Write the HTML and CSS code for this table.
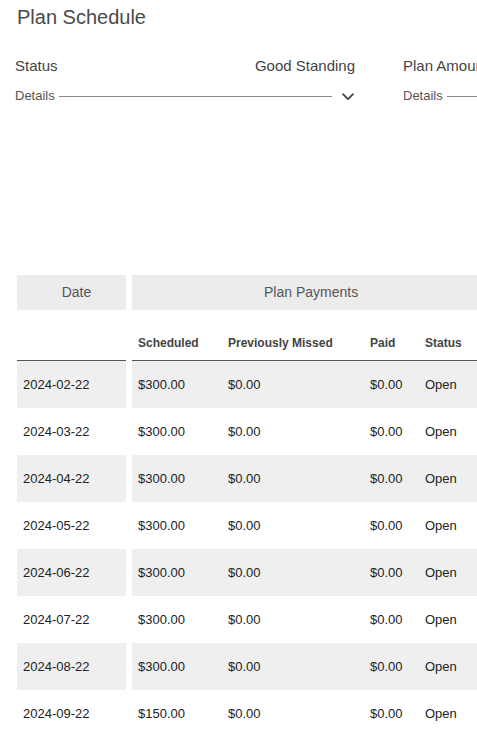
FILE: index.html
```html
<!DOCTYPE html>
<html lang="en">
<head>
<meta charset="utf-8">
<title>Plan Schedule</title>
<link rel="stylesheet" href="styles.css">
</head>
<body>
<div class="page">
  <h1 class="title">Plan Schedule</h1>

  <div class="cards">
    <div class="card">
      <div class="card-top">
        <span class="card-label">Status</span>
        <span class="card-value">Good Standing</span>
      </div>
      <div class="card-details">
        <span class="details-label">Details</span>
        <span class="details-line"></span>
        <svg class="chev" width="12" height="8" viewBox="0 0 12 8"><polyline points="1,1.2 6,6.2 11,1.2" fill="none" stroke="#444" stroke-width="1.8" stroke-linecap="round" stroke-linejoin="round"/></svg>
      </div>
    </div>
    <div class="card">
      <div class="card-top">
        <span class="card-label">Plan Amount</span>
        <span class="card-value">$2,250.00</span>
      </div>
      <div class="card-details">
        <span class="details-label">Details</span>
        <span class="details-line"></span>
        <svg class="chev" width="12" height="8" viewBox="0 0 12 8"><polyline points="1,1.2 6,6.2 11,1.2" fill="none" stroke="#444" stroke-width="1.8" stroke-linecap="round" stroke-linejoin="round"/></svg>
      </div>
    </div>
  </div>

  <div class="sched">
    <div class="row head">
      <div class="c-date">Date</div>
      <div class="c-pay">Plan Payments</div>
    </div>
    <div class="row sub">
      <div class="c-date"></div>
      <div class="c-pay cols">
        <span>Scheduled</span><span>Previously Missed</span><span>Paid</span><span>Status</span>
      </div>
    </div>
    <div class="row data alt">
      <div class="c-date">2024-02-22</div>
      <div class="c-pay cols"><span>$300.00</span><span>$0.00</span><span>$0.00</span><span>Open</span></div>
    </div>
    <div class="row data">
      <div class="c-date">2024-03-22</div>
      <div class="c-pay cols"><span>$300.00</span><span>$0.00</span><span>$0.00</span><span>Open</span></div>
    </div>
    <div class="row data alt">
      <div class="c-date">2024-04-22</div>
      <div class="c-pay cols"><span>$300.00</span><span>$0.00</span><span>$0.00</span><span>Open</span></div>
    </div>
    <div class="row data">
      <div class="c-date">2024-05-22</div>
      <div class="c-pay cols"><span>$300.00</span><span>$0.00</span><span>$0.00</span><span>Open</span></div>
    </div>
    <div class="row data alt">
      <div class="c-date">2024-06-22</div>
      <div class="c-pay cols"><span>$300.00</span><span>$0.00</span><span>$0.00</span><span>Open</span></div>
    </div>
    <div class="row data">
      <div class="c-date">2024-07-22</div>
      <div class="c-pay cols"><span>$300.00</span><span>$0.00</span><span>$0.00</span><span>Open</span></div>
    </div>
    <div class="row data alt">
      <div class="c-date">2024-08-22</div>
      <div class="c-pay cols"><span>$300.00</span><span>$0.00</span><span>$0.00</span><span>Open</span></div>
    </div>
    <div class="row data">
      <div class="c-date">2024-09-22</div>
      <div class="c-pay cols"><span>$150.00</span><span>$0.00</span><span>$0.00</span><span>Open</span></div>
    </div>
  </div>
</div>
</body>
</html>
```

FILE: styles.css
```css
html, body {
  margin: 0;
  padding: 0;
  background: #fff;
}
body {
  font-family: "Liberation Sans", Arial, Helvetica, sans-serif;
  color: #222;
  overflow: hidden;
}
.page {
  width: 477px;
  overflow: hidden;
}
.title {
  margin: 0;
  padding: 5px 0 0 17px;
  font-size: 20px;
  line-height: 24px;
  font-weight: 400;
  color: #4a4a4a;
}
.cards {
  display: flex;
  gap: 48px;
  margin-top: 28px;
  padding-left: 15px;
}
.card {
  flex: 0 0 340px;
}
.card-top {
  display: flex;
  justify-content: space-between;
  font-size: 15px;
  line-height: 18px;
  color: #444;
}
.card-details {
  display: flex;
  align-items: center;
  margin-top: 13px;
  height: 16px;
}
.details-label {
  font-size: 13px;
  line-height: 16px;
  color: #555;
}
.details-line {
  flex: 1;
  height: 1px;
  background: #888;
  margin: 0 10px 0 4px;
}
.chev {
  display: block;
  margin-top: 2px;
  margin-right: 1px;
}
.sched {
  margin-top: 171px;
  margin-left: 17px;
}
.row {
  display: flex;
  gap: 6px;
}
.c-date {
  flex: 0 0 109px;
  box-sizing: border-box;
}
.c-pay {
  flex: 0 0 377px;
  box-sizing: border-box;
}
.cols {
  display: grid;
  grid-template-columns: 90px 142px 55px 90px;
}
.head .c-date,
.head .c-pay {
  height: 35px;
  background: #ececec;
  color: #555;
  font-size: 14px;
  line-height: 35px;
}
.head .c-date {
  text-align: center;
  padding-left: 10px;
}
.head .c-pay {
  text-align: left;
  padding-left: 132px;
}
.sub .c-date,
.sub .c-pay {
  height: 51px;
  border-bottom: 1px solid #555;
}
.sub .cols {
  align-items: end;
  padding-bottom: 10px;
  font-size: 12px;
  line-height: 14px;
  font-weight: 700;
  color: #444;
}
.sub .cols span {
  padding-left: 6px;
}
.data .c-date,
.data .c-pay {
  height: 47px;
  font-size: 13px;
  line-height: 47px;
  color: #222;
}
.data .c-date {
  padding-left: 6px;
}
.data .cols span {
  padding-left: 6px;
}
.alt .c-date,
.alt .c-pay {
  background: #efefef;
}
```
